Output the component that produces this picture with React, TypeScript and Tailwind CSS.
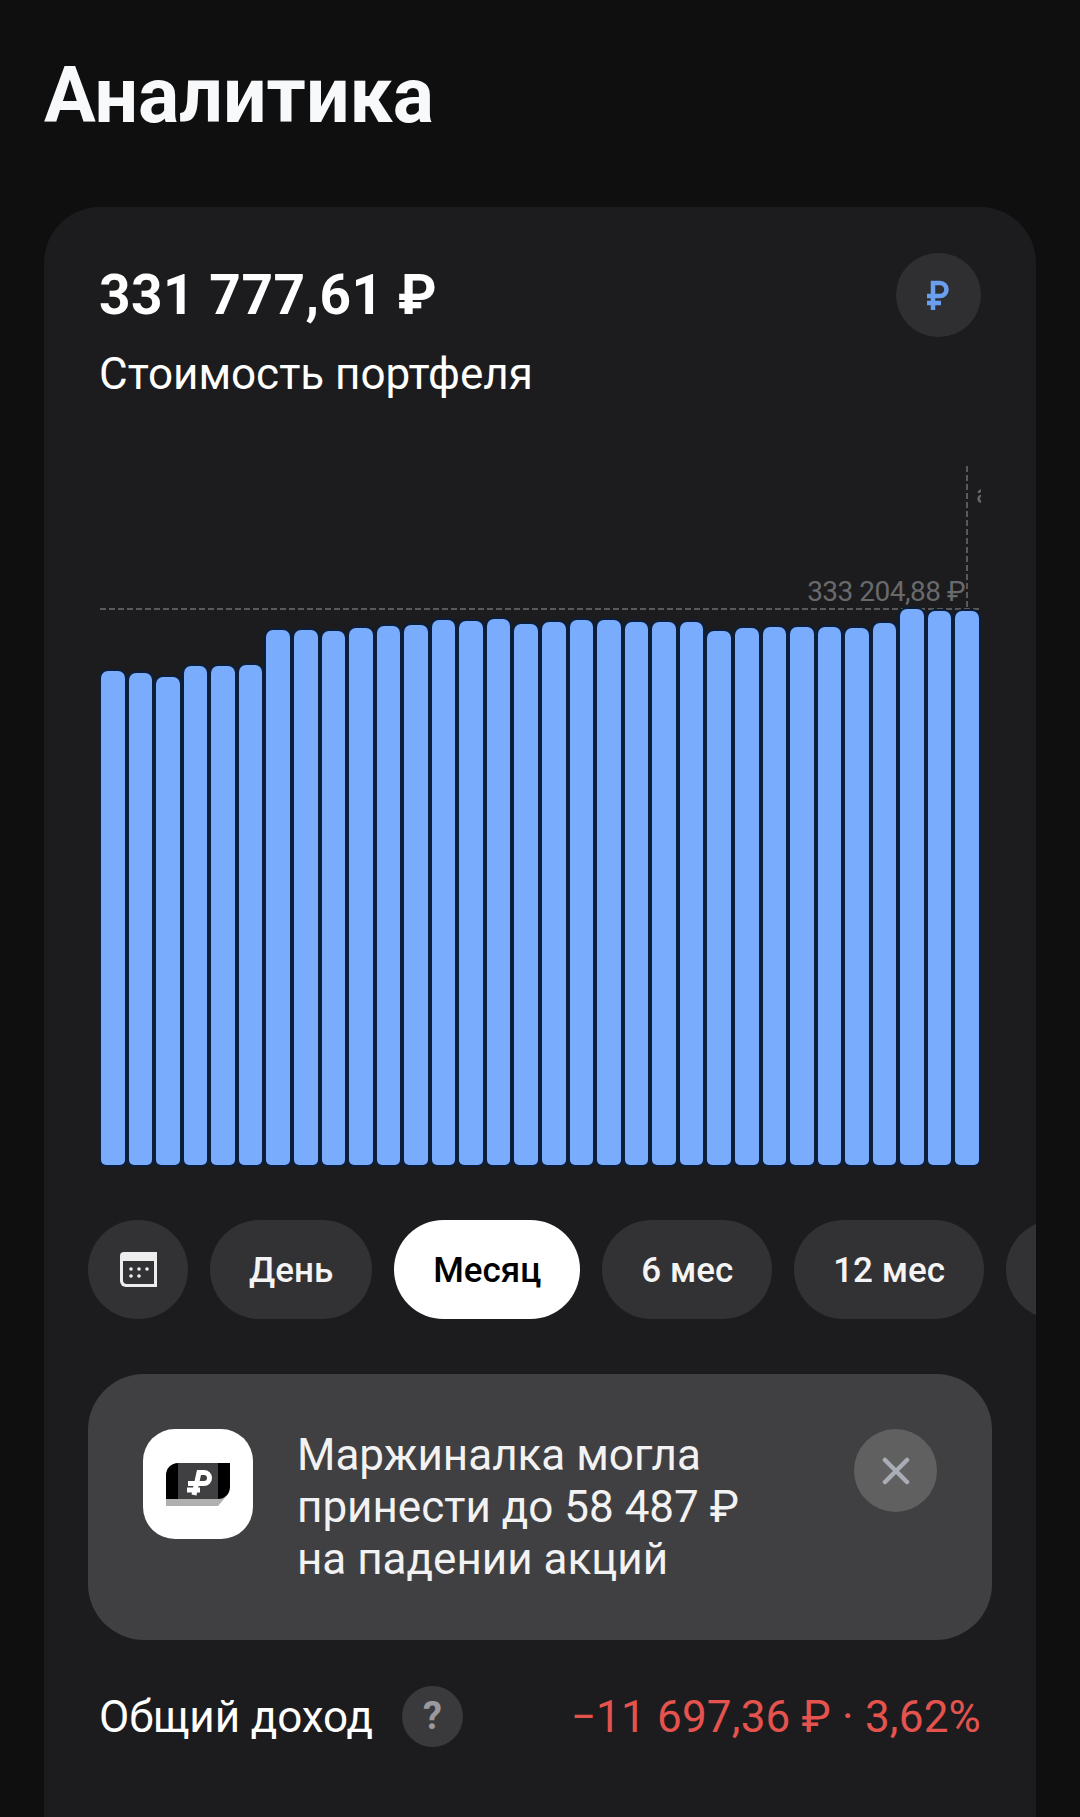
const bars = [671, 673, 677, 666, 666, 665, 630, 630, 631, 628, 626, 625, 620, 621, 619, 624, 622, 620, 620, 622, 622, 622, 631, 628, 627, 627, 627, 628, 623, 609, 611, 611];

const chips = ["День", "Месяц", "6 мес", "12 мес"];

function RubleIcon({ className }: { className?: string }) {
  return (
    <svg viewBox="0 0 24 30" className={className} fill="none" stroke="currentColor" strokeWidth="4.5">
      <path d="M8 30V3h7a6.5 6.5 0 0 1 0 13H2" />
      <path d="M2 23h14" />
    </svg>
  );
}

export default function App() {
  return (
    <div className="w-[1080px] h-[1817px] overflow-hidden bg-[#0f0f10] font-['Roboto',sans-serif] text-white">
      <h1 className="pl-[44px] pt-[54px] text-[77px] leading-[84px] font-bold text-[#f8f9fa]">Аналитика</h1>

      <div className="mx-[44px] mt-[69px] h-[1700px] overflow-hidden rounded-t-[56px] bg-[#1c1c1e]">
        {/* Header */}
        <div className="flex items-start justify-between pl-[55px] pr-[55px] pt-[46px]">
          <div className="pt-[10px]">
            <div className="text-[55px] leading-[64px] font-bold tracking-[0.5px]">331 777,61 ₽</div>
            <div className="mt-[21px] text-[44px] leading-[52px]">Стоимость портфеля</div>
          </div>
          <div className="flex h-[84px] w-[85px] items-center justify-center rounded-full bg-[#2f2f32]">
            <RubleIcon className="mr-[3px] h-[30px] w-[24px] text-[#6a9ff0]" />
          </div>
        </div>

        {/* Chart */}
        <div className="relative mx-[57px] mt-[66px] h-[699px] w-[878px]">
          <div className="absolute right-[11px] top-0 h-[143px] w-[2px] bg-[repeating-linear-gradient(180deg,#59595c_0_6px,transparent_6px_9px)]" />
          <div className="absolute left-[-1px] right-0 top-[142px] h-[2px] bg-[repeating-linear-gradient(90deg,#59595c_0_6px,transparent_6px_9px)]" />
          <div className="absolute right-[14px] top-[110px] text-[28px] leading-[32px] tracking-[-0.5px] text-[#69696c]">333 204,88 ₽</div>
          <div className="absolute left-[875px] top-[10px] h-[36px] w-[5px] overflow-hidden text-[26px] leading-[36px] text-[#69696c]">а</div>
          <div className="absolute inset-x-0 bottom-0 flex h-[556px] items-end gap-[4px]">
            {bars.map((top, i) => (
              <div
                key={i}
                className="flex-1 rounded-t-[7px] rounded-b-[5px] bg-[#7aacfd] shadow-[0_0_0_2px_#0c1e3a]"
                style={{ height: 1165 - top }}
              />
            ))}
          </div>
        </div>

        {/* Period chips */}
        <div className="mt-[55px] flex gap-[22px] pl-[44px]">
          <div className="flex h-[99px] w-[100px] shrink-0 items-center justify-center rounded-full bg-[#323234]">
            <svg viewBox="0 0 37 35" className="h-[35px] w-[37px]">
              <path d="M4 0h33v35H6a6 6 0 0 1-6-6V4a4 4 0 0 1 4-4z" fill="#ededed" />
              <path d="M3 9h31v23H7a4 4 0 0 1-4-4z" fill="#323234" />
              <g fill="#f0f0f0">
                <circle cx="11" cy="17" r="1.8" />
                <circle cx="19" cy="17" r="1.8" />
                <circle cx="27" cy="17" r="1.8" />
                <circle cx="11" cy="24" r="1.8" />
                <circle cx="19" cy="24" r="1.8" />
              </g>
            </svg>
          </div>
          {chips.map((label) => (
            <div
              key={label}
              className={
                label === "Месяц"
                  ? "flex h-[99px] shrink-0 items-center rounded-full bg-white px-[39px] pt-[3px] text-[35px] font-medium text-black"
                  : "flex h-[99px] shrink-0 items-center rounded-full bg-[#323234] px-[39px] pt-[3px] text-[35px] font-medium text-[#f4f4f5]"
              }
            >
              {label}
            </div>
          ))}
          <div className="h-[99px] w-[100px] shrink-0 rounded-full bg-[#323234]" />
        </div>

        {/* Promo banner */}
        <div className="mx-[44px] mt-[55px] flex h-[266px] items-start rounded-[56px] bg-[#404042] pl-[55px] pr-[55px] pt-[55px]">
          <div className="flex h-[110px] w-[110px] shrink-0 items-center justify-center rounded-[32px] bg-white">
            <svg viewBox="0 0 64 43" className="h-[43px] w-[64px]">
              <path d="M0 36h52l11-6-11 13H0z" fill="#b0b0b0" />
              <path d="M0 12a12 12 0 0 1 12-12h52v24a12 12 0 0 1-12 12H0z" fill="#000" />
              <rect x="12" y="0" width="40" height="36" fill="#404042" />
              <path d="M28 32l5-22.500h5a5.500 5.500 0 0 1 0 11H22M21 27h13" fill="none" stroke="#fff" strokeWidth="5" />
            </svg>
          </div>
          <div className="ml-[44px] flex-1 text-[44px] leading-[52px] text-[#f2f2f3]">
            <div>Маржиналка могла</div>
            <div>принести до 58 487 ₽</div>
            <div>на падении акций</div>
          </div>
          <div className="flex h-[83px] w-[83px] shrink-0 items-center justify-center rounded-full bg-[#606061]">
            <svg viewBox="0 0 28 28" className="h-[28px] w-[28px]" stroke="#a9adb5" strokeWidth="4.5" strokeLinecap="round">
              <path d="M3 3l22 22M25 3L3 25" />
            </svg>
          </div>
        </div>

        {/* Total income */}
        <div className="flex items-center justify-between pl-[55px] pr-[55px] pt-[46px]">
          <div className="flex items-center gap-[29px]">
            <span className="text-[44px] leading-[50px] tracking-[-0.1px]">Общий доход</span>
            <div className="flex h-[61px] w-[61px] items-center justify-center rounded-full bg-[#3a3a3d] text-[38px] font-bold text-[#9a9a9e]">?</div>
          </div>
          <div className="text-[44px] leading-[50px] tracking-[0.2px] text-[#e5534f]">−11 697,36 ₽ · 3,62%</div>
        </div>
      </div>
    </div>
  );
}
